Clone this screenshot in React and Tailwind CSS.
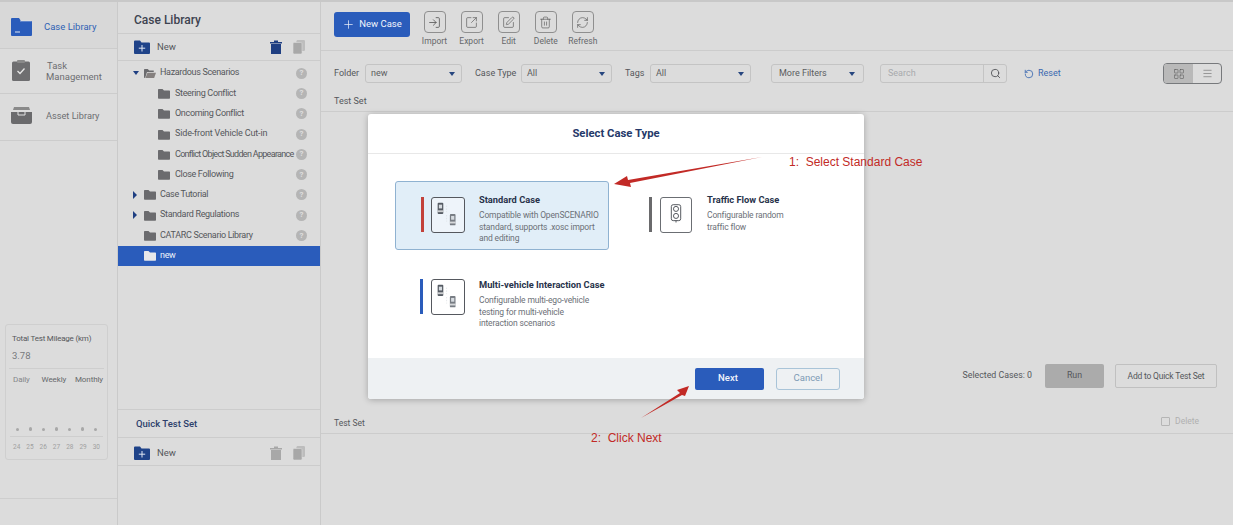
import React from "react";
import { Plus, Search, RotateCcw, LayoutGrid, Menu, SquarePen, Trash2, SquareArrowOutUpRight, LogIn, RefreshCw } from "lucide-react";

const Folder = ({ className = "", fill = "#6b6b6e" }) => (
  <svg viewBox="0 0 16 14" className={className}><path d="M0 2a1 1 0 0 1 1-1h5l2 2h7a1 1 0 0 1 1 1v9a1 1 0 0 1-1 1H1a1 1 0 0 1-1-1z" fill={fill} /></svg>
);
const OpenFolder = ({ className = "" }) => (
  <svg viewBox="0 0 16 14" className={className}><path d="M0 2a1 1 0 0 1 1-1h4l2 2h6v2H4L1.500 13H1a1 1 0 0 1-1-1z" fill="#6b6b6e" /><path d="M4.500 6H16l-2.500 7H2z" fill="#85807f" /></svg>
);
const NewFolder = () => (
  <svg viewBox="0 0 16 14" className="w-4 h-[14px]"><path d="M0 1.500a1 1 0 0 1 1-1h5l1.500 2H15a1 1 0 0 1 1 1V13a1 1 0 0 1-1 1H1a1 1 0 0 1-1-1z" fill="#1f4389" /><path d="M8 5v6.500M4.800 8.200h6.400" stroke="#dfe6f2" strokeWidth="1" /></svg>
);
const BinSolid = ({ fill }) => (
  <svg viewBox="0 0 12 14" className="w-3 h-[14px]"><path d="M0 2h12v1.400H0zM4 .4h4V2H4zM1 4h10v10H1z" fill={fill} /></svg>
);
const Copies = () => (
  <svg viewBox="0 0 12 14" className="w-3 h-[14px]"><rect x="3.500" y="0" width="8.500" height="11" rx="1.200" fill="#bdbdbd" /><rect x="0" y="2.500" width="9" height="11.500" rx="1.200" fill="#a8a8a8" stroke="#dcdcdc" strokeWidth=".6" /></svg>
);

const Cars = ({ soft }) => (
  <svg viewBox="0 0 34 36" className={`w-[34px] h-[36px] rounded-[3px] border border-[#55585e] shrink-0 ${soft ? "bg-[#eef4fa]" : "bg-white"}`}>
    <rect x="6" y="5" width="6" height="12" rx="1" fill="#555b63" /><rect x="7.300" y="7" width="3.400" height="4" fill="#d6dbe0" /><rect x="6" y="13" width="6" height="2" fill="#fff" opacity=".7" />
    <rect x="19" y="17" width="6" height="12" rx="1" fill="#777c83" /><rect x="20.300" y="19" width="3.400" height="4" fill="#d6dbe0" /><rect x="19" y="25" width="6" height="2" fill="#fff" opacity=".7" />
    <path d="M15.500 8v7M15.500 18v7" stroke="#d5d8dc" strokeWidth=".6" strokeDasharray="1.500 1.500" />
  </svg>
);
const Light = () => (
  <svg viewBox="0 0 32 36" className="w-[32px] h-[36px] rounded-[3px] border border-[#6b6e73] bg-white shrink-0 mx-[1px]">
    <rect x="11" y="7" width="10" height="17" rx="2" fill="none" stroke="#4d5157" strokeWidth="1" />
    <circle cx="16" cy="11.500" r="2.700" fill="none" stroke="#4d5157" /><circle cx="16" cy="19" r="2.700" fill="none" stroke="#4d5157" />
    <path d="M16 24v2" stroke="#4d5157" />
  </svg>
);

const Tree = ({ indent, caret, name, open, active, help = true, track = "tracking-[-0.33px]" }) => (
  <div className={`h-[20.300px] flex items-center text-[9px] ${track} ${active ? "bg-[#2a5cbb] text-[#eef2fa]" : "text-[#55575b]"}`}>
    <div className={`flex items-center ${indent ? "pl-[40px]" : "pl-[14px]"}`}>
      {!indent && (
        <span className="w-[12px] flex items-center">
          {caret === "down" && <span className="w-0 h-0 border-x-[3px] border-x-transparent border-t-[4px] border-t-[#1f3f82] ml-[0.500px]" />}
          {caret === "right" && <span className="w-0 h-0 border-y-[4px] border-y-transparent border-l-[4px] border-l-[#1f3f82] ml-[1px]" />}
        </span>
      )}
      {open ? <OpenFolder className="w-[12px] h-[11px]" /> : <Folder className="w-[12px] h-[11px]" fill={active ? "#e8e8ea" : "#6b6b6e"} />}
    </div>
    <span className={`${indent ? "ml-[5px]" : "ml-[4px]"} flex-1 whitespace-nowrap`}>{name}</span>
    {help && <span className="w-[11px] h-[11px] rounded-full bg-[#b5b5b5] text-[#dedede] text-[8px] tracking-normal font-bold flex items-center justify-center mr-[13px]">?</span>}
  </div>
);

const Tool = ({ icon, label }) => (
  <div className="flex flex-col items-center w-[37px]">
    <span className="w-[22px] h-[22px] border border-[#8f8f8f] rounded-[4px] flex items-center justify-center text-[#555]">{icon}</span>
    <span className="text-[8.500px] text-[#66686b] mt-[2px]">{label}</span>
  </div>
);

const Select = ({ w, value, pad = "px-[5px]" }) => (
  <div className={`${w} ${pad} h-[19px] border border-[#c4c4c4] rounded-[3px] flex items-center justify-between text-[9px] text-[#5b5d60]`}>
    <span>{value}</span>
    <span className="w-0 h-0 border-x-[3px] border-x-transparent border-t-[4px] border-t-[#27467f] mr-[1px]" />
  </div>
);

const Card = ({ selected, bar, icon, title, lines, iconTop = "mt-[15px]" }) => (
  <div className={`h-[69px] flex items-start rounded-[3px] border ${selected ? "border-[#8fb2d1] bg-[#e1eef8]" : "border-transparent"}`}>
    <span className={`${bar} ${iconTop} w-[3px] h-[35px] shrink-0 ml-[25px]`} />
    <span className={`ml-[7px] ${iconTop}`}>{icon}</span>
    <div className="ml-[14px] mt-[10.500px]">
      <div className="text-[9.300px] font-bold text-[#27324a] leading-[13px] mb-[4.500px] whitespace-nowrap">{title}</div>
      {lines.map((l) => <div key={l} className="text-[8.500px] tracking-[-0.15px] text-[#6c7077] leading-[11.500px] whitespace-nowrap">{l}</div>)}
    </div>
  </div>
);

export default function App() {
  return (
    <div className="relative w-[1233px] h-[525px] overflow-hidden bg-[#dcdcdc] border-t-2 border-[#c8c8c8] flex font-['Roboto',sans-serif]">
      <aside className="w-[118px] border-r border-[#cacaca] flex flex-col shrink-0">
        <div className="h-[47px] bg-[#d8d8d8] border-b border-[#cccccc] flex items-center pl-[11px] pt-[3px]">
          <svg viewBox="0 0 21 18" className="w-[21px] h-[18px]"><path d="M0 1a1 1 0 0 1 1-1h7l2 3h10a1 1 0 0 1 1 1v13a1 1 0 0 1-1 1H1a1 1 0 0 1-1-1z" fill="#2a5cbb" /><path d="M4 14h5" stroke="#dfe6f2" /><path d="M9 3h11" stroke="#dfe6f2" strokeWidth=".6" /></svg>
          <span className="ml-[12px] mt-[2px] text-[9.500px] text-[#2f62b5]">Case Library</span>
        </div>
        <div className="h-[45px] border-b border-[#cccccc] flex items-center pl-[12px]">
          <svg viewBox="0 0 18 21" className="w-[18px] h-[21px] -mt-[2px]"><rect y="1.500" width="18" height="19.500" rx="1.500" fill="#6e6e70" /><rect x="5" width="8" height="3" rx="1" fill="#8a8a8a" /><path d="M5.500 11l2.500 2.500 4.500-5" stroke="#e6e6e6" strokeWidth="1.300" fill="none" /></svg>
          <span className="ml-[17px] text-[9.500px] leading-[11px] text-[#6c6e71]">Task<br /><span className="-ml-[1px]">Management</span></span>
        </div>
        <div className="h-[47px] border-b border-[#cccccc] flex items-center pl-[11px] pb-[3px]">
          <svg viewBox="0 0 21 17" className="w-[21px] h-[17px]"><path d="M3 0h15l1 3H2z" fill="#8a8a8a" /><path d="M0 5h21v10a2 2 0 0 1-2 2H2a2 2 0 0 1-2-2z" fill="#6a6a6c" /><path d="M7 5v3h7V5" stroke="#e2e2e2" strokeWidth="1" fill="none" /></svg>
          <span className="ml-[14px] text-[9.200px] text-[#6c6e71]">Asset Library</span>
        </div>
        <div className="mt-[183px] ml-[5px] w-[103px] h-[136px] border border-[#cfcfcf] rounded-[3px] flex flex-col">
          <div className="text-[8px] tracking-[-0.2px] text-[#55575b] pl-[6px] pt-[8px]">Total Test Mileage (km)</div>
          <div className="text-[9.500px] text-[#77797c] pl-[6px] mt-[4px]">3.78</div>
          <div className="mx-[3px] mt-[5px] border-t border-[#cecece]" />
          <div className="flex justify-between text-[8px] tracking-[-0.1px] text-[#66686b] pl-[7px] pr-[4px] mt-[5px]"><span className="text-[#85878a]">Daily</span><span className="ml-[3px]">Weekly</span><span>Monthly</span></div>
          <div className="flex justify-between px-[10px] mt-[40px] h-[6px] items-center">
            {[0, 1, 2, 3, 4, 5, 6].map((i) => <span key={i} className={`rounded-full bg-[#a8a8a8] ${i % 2 ? "w-[2.500px] h-[4px]" : "w-[3px] h-[3px]"}`} />)}
          </div>
          <div className="mx-[4px] mt-[4px] border-t border-[#cecece]" />
          <div className="flex justify-between px-[7px] mt-[6px] text-[6.500px] text-[#a0a0a0]">
            {["24", "25", "26", "27", "28", "29", "30"].map((d) => <span key={d}>{d}</span>)}
          </div>
        </div>
        <div className="mt-[38px] border-t border-[#cecece]" />
      </aside>

      <section className="w-[203px] border-r border-[#cacaca] flex flex-col shrink-0">
        <div className="h-[32px] border-b border-[#cccccc] flex items-center pl-[16px] pt-[5px] text-[12px] font-medium text-[#3d4350]">Case Library</div>
        <div className="h-[27px] border-b border-[#cccccc] flex items-center pl-[16px]">
          <NewFolder /><span className="ml-[7px] text-[9.500px] text-[#55575b] flex-1">New</span>
          <BinSolid fill="#1f3f82" /><span className="w-[11px]" /><Copies /><span className="w-[15px]" />
        </div>
        <div className="pt-[2px]">
          <Tree caret="down" open name="Hazardous Scenarios" />
          <Tree indent name="Steering Conflict" />
          <Tree indent name="Oncoming Conflict" />
          <Tree indent name="Side-front Vehicle Cut-in" track="tracking-[-0.15px]" />
          <Tree indent name="Conflict Object Sudden Appearance" track="tracking-[-0.7px]" />
          <Tree indent name="Close Following" />
          <Tree caret="right" name="Case Tutorial" />
          <Tree caret="right" name="Standard Regulations" />
          <Tree name="CATARC Scenario Library" />
          <Tree active name="new" help={false} />
        </div>
        <div className="mt-[143px] h-[29px] border-y border-[#cccccc] flex items-center pl-[18px] pt-[2px] text-[9.500px] font-medium text-[#2c3f6b]">Quick Test Set</div>
        <div className="h-[28px] border-b border-[#cccccc] flex items-center pl-[16px] pt-[3px]">
          <NewFolder /><span className="ml-[7px] text-[9.500px] text-[#55575b] flex-1">New</span>
          <BinSolid fill="#a8a8a8" /><span className="w-[11px]" /><Copies /><span className="w-[15px]" />
        </div>
      </section>

      <main className="flex-1 flex flex-col min-w-0">
        <div className="h-[49px] border-b border-[#cccccc] flex items-start pl-[13px] pt-[9px]">
          <button className="w-[76px] h-[25px] mt-[1px] rounded-[3px] bg-[#2a5cbb] text-[#f2f5fb] text-[9.500px] flex items-center justify-center gap-[4px]"><Plus size={13} strokeWidth={1.300} />New Case</button>
          <div className="flex ml-[6px] gap-[0.100px]">
            <Tool icon={<LogIn size={13} strokeWidth={1.500} />} label="Import" />
            <Tool icon={<SquareArrowOutUpRight size={13} strokeWidth={1.200} />} label="Export" />
            <Tool icon={<SquarePen size={13} strokeWidth={1.200} />} label="Edit" />
            <Tool icon={<Trash2 size={13} strokeWidth={1.200} />} label="Delete" />
            <Tool icon={<RefreshCw size={13} strokeWidth={1.200} />} label="Refresh" />
          </div>
        </div>
        <div className="h-[61px] border-b border-[#cccccc] pt-[13px] pl-[13px] pr-[11px]">
          <div className="flex items-center text-[9px] text-[#55575b] h-[19px]">
            <span className="w-[31px]">Folder</span><Select w="w-[97px]" value="new" />
            <span className="ml-[13px] w-[46px] whitespace-nowrap">Case Type</span><Select w="w-[91px]" value="All" />
            <span className="ml-[13px] w-[25px]">Tags</span><Select w="w-[101px]" value="All" />
            <span className="ml-[20px]" /><Select w="w-[93px]" value="More Filters" pad="px-[7px]" />
            <div className="ml-[16px] w-[127px] h-[19px] border border-[#c4c4c4] rounded-[3px] flex items-center">
              <span className="flex-1 pl-[7px] text-[#a8aaad]">Search</span>
              <span className="w-[23px] h-full border-l border-[#c4c4c4] flex items-center justify-center text-[#55575b]"><Search size={11} /></span>
            </div>
            <span className="ml-[17px] flex items-center gap-[4px] text-[#3a68b0]"><RotateCcw size={10} />Reset</span>
            <div className="ml-auto w-[59px] h-[21px] border border-[#77797c] rounded-[4px] flex overflow-hidden text-[#5e5e5e]">
              <span className="w-[29px] bg-[#b9b9b9] flex items-center justify-center"><LayoutGrid size={12} strokeWidth={1.200} /></span>
              <span className="flex-1 flex items-center justify-center"><Menu size={11} strokeWidth={1.200} /></span>
            </div>
          </div>
          <div className="text-[9px] text-[#55575b] mt-[12px]">Test Set</div>
        </div>
        <div className="h-[300px] flex flex-col justify-end pb-[24px] pr-[16px]">
          <div className="flex items-center justify-end text-[8.800px] text-[#55575b]">
            <span className="mr-[13px]">Selected Cases: 0</span>
            <span className="w-[59px] h-[24px] rounded-[2px] bg-[#ababab] flex items-center justify-center">Run</span>
            <span className="ml-[11px] w-[102px] h-[24px] rounded-[2px] border border-[#c0c0c0] flex items-center justify-center text-[8.500px] tracking-[-0.2px]">Add to Quick Test Set</span>
          </div>
        </div>
        <div className="border-b border-[#cccccc] h-[22px] flex items-center justify-between pl-[13px] pr-[34px] pt-[2px]">
          <span className="text-[8.500px] text-[#55575b]">Test Set</span>
          <span className="flex items-center gap-[5px] text-[8.500px] text-[#b0b0b0] -mt-[4px]"><span className="w-[9px] h-[9px] border border-[#b5b5b5] rounded-[1px]" />Delete</span>
        </div>
      </main>

      <div className="absolute left-[368px] top-[112px] w-[496px] h-[285px] rounded-[3px] bg-white shadow-[0_1px_6px_rgba(0,0,0,0.25)] flex flex-col overflow-hidden">
        <div className="h-[40px] pt-[1px] border-b border-[#e8e8e8] flex items-center justify-center text-[11.300px] font-bold text-[#25396a] shrink-0">Select Case Type</div>
        <div className="flex-1 pt-[27px] pl-[27px] pr-[30px] grid grid-cols-[214px_1fr] grid-rows-[69px_69px] gap-x-[14px] gap-y-[16px] content-start">
          <Card selected bar="bg-[#c2413a]" icon={<Cars soft />} title="Standard Case" lines={["Compatible with OpenSCENARIO", "standard, supports .xosc import", "and editing"]} />
          <Card bar="bg-[#6a6a6c]" icon={<Light />} title="Traffic Flow Case" lines={["Configurable random", "traffic flow"]} />
          <Card bar="bg-[#2a5cbb] -translate-x-[1px]" iconTop="mt-[12px]" icon={<Cars />} title="Multi-vehicle Interaction Case" lines={["Configurable multi-ego-vehicle", "testing for multi-vehicle", "interaction scenarios"]} />
        </div>
        <div className="h-[41px] bg-[#eef1f3] flex items-center justify-end gap-[12px] pr-[24px] shrink-0 text-[9.500px]">
          <span className="w-[69px] h-[22px] pr-[3px] rounded-[2px] bg-[#2a5cbb] text-[#f2f5fb] font-medium flex items-center justify-center">Next</span>
          <span className="w-[64px] h-[22px] rounded-[3px] border border-[#a9c4d8] text-[#7d9ab5] flex items-center justify-center">Cancel</span>
        </div>
      </div>

      <svg className="absolute left-0 -top-[2px] pointer-events-none" width="1233" height="525">
        <path d="M762 157 L630 183 L631 187 L614 184 L627 176 L628 180 Z" fill="#c22a26" />
        <path d="M641 418 L680 393 L677 390 L689 386 L685 396 L682 395 Z" fill="#c22a26" />
      </svg>
      <span className="absolute left-[789px] top-[151px] font-['Liberation_Sans',sans-serif] text-[12px] text-[#c22a26] whitespace-nowrap">1:&nbsp;&nbsp;Select Standard Case</span>
      <span className="absolute left-[591px] top-[427px] font-['Liberation_Sans',sans-serif] text-[12px] text-[#c22a26] whitespace-nowrap">2:&nbsp;&nbsp;Click Next</span>
    </div>
  );
}
